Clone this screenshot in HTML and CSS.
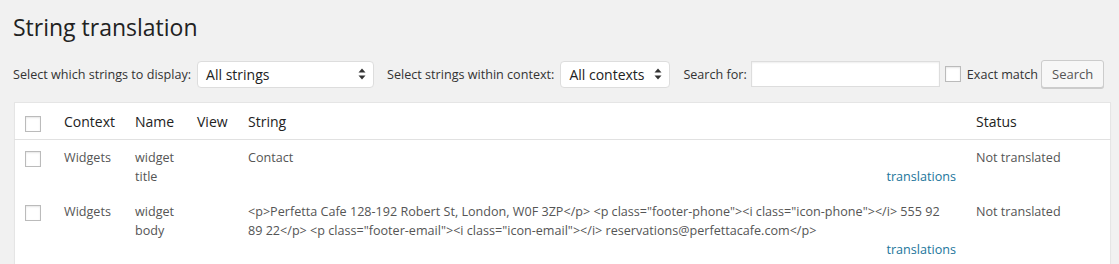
FILE: index.html
```html
<!DOCTYPE html>
<html lang="en">
<head>
    <meta charset="UTF-8">
    <title>String translation</title>
    <link rel="stylesheet" href="styles.css">
</head>
<body>
    <div class="wrap">
        <h2 class="page-title">String translation</h2>
        <div class="filters">
            <label class="filter-label">Select which strings to display:</label>
            <div class="select select-strings">
                <span>All strings</span>
                <svg width="8" height="12" viewBox="0 0 8 12"><path d="M4 0.5 L7.5 4.5 H0.5 Z M4 11.5 L7.5 7.5 H0.5 Z" fill="#333"/></svg>
            </div>
            <label class="filter-label gap">Select strings within context:</label>
            <div class="select select-context">
                <span>All contexts</span>
                <svg width="8" height="12" viewBox="0 0 8 12"><path d="M4 0.5 L7.5 4.5 H0.5 Z M4 11.5 L7.5 7.5 H0.5 Z" fill="#333"/></svg>
            </div>
            <label class="filter-label gap-sm">Search for:</label>
            <input class="search-input" type="text">
            <span class="checkbox"></span>
            <label class="filter-label exact">Exact match</label>
            <button class="button">Search</button>
        </div>
        <table class="strings">
            <thead>
                <tr>
                    <th class="col-check"><span class="checkbox"></span></th>
                    <th class="col-context">Context</th>
                    <th class="col-name">Name</th>
                    <th class="col-view">View</th>
                    <th class="col-string">String</th>
                    <th class="col-status">Status</th>
                </tr>
            </thead>
            <tbody>
                <tr>
                    <td class="col-check"><span class="checkbox"></span></td>
                    <td>Widgets</td>
                    <td>widget title</td>
                    <td></td>
                    <td>
                        <div>Contact</div>
                        <div class="row-link"><a href="#">translations</a></div>
                    </td>
                    <td>Not translated</td>
                </tr>
                <tr>
                    <td class="col-check"><span class="checkbox"></span></td>
                    <td>Widgets</td>
                    <td>widget body</td>
                    <td></td>
                    <td>
                        <div>&lt;p&gt;Perfetta Cafe 128-192 Robert St, London, W0F 3ZP&lt;/p&gt; &lt;p class="footer-phone"&gt;&lt;i class="icon-phone"&gt;&lt;/i&gt; 555 92 89 22&lt;/p&gt; &lt;p class="footer-email"&gt;&lt;i class="icon-email"&gt;&lt;/i&gt; reservations@perfettacafe.com&lt;/p&gt;</div>
                        <div class="row-link"><a href="#">translations</a></div>
                    </td>
                    <td>Not translated</td>
                </tr>
            </tbody>
        </table>
    </div>
</body>
</html>
```
FILE: styles.css
```css
body {
    margin: 0;
    background: #f1f1f1;
    color: #444;
    font-family: "Open Sans", sans-serif;
    font-size: 12.6px;
    line-height: 19px;
}
.wrap {
    padding: 0 8px 0 13px;
}
.page-title {
    margin: 0;
    padding: 13px 0 4px;
    font-size: 23px;
    font-weight: 400;
    line-height: 29px;
    color: #222;
}
.filters {
    display: flex;
    align-items: center;
    margin-top: 14px;
    height: 28px;
    white-space: nowrap;
}
.filter-label {
    flex-shrink: 0;
    color: #333;
    margin-right: 6px;
}
.filter-label.gap {
    margin-left: 13px;
}
.filter-label.gap-sm {
    margin-left: 13px;
    margin-right: 4px;
}
.filter-label.exact {
    margin-left: 6px;
    margin-right: 3px;
}
.select {
    display: flex;
    flex-shrink: 0;
    align-items: center;
    justify-content: space-between;
    box-sizing: border-box;
    height: 27px;
    padding: 0 7px 0 8px;
    background: #fff;
    border: 1px solid #ddd;
    border-radius: 4px;
    font-size: 14px;
    color: #222;
}
.select-strings {
    width: 177px;
}
.select-context {
    width: 110px;
}
.search-input {
    flex-shrink: 0;
    box-sizing: border-box;
    width: 189px;
    height: 26px;
    margin: 0;
    border: 1px solid #ddd;
    background: #fff;
    box-shadow: inset 0 1px 2px rgba(0, 0, 0, 0.07);
}
.checkbox {
    display: inline-block;
    flex-shrink: 0;
    box-sizing: border-box;
    width: 16px;
    height: 16px;
    border: 1px solid #bbb;
    background: #fff;
    box-shadow: inset 0 1px 2px rgba(0, 0, 0, 0.1);
}
.filters .checkbox {
    margin-left: 5px;
}
.button {
    flex-shrink: 0;
    box-sizing: border-box;
    height: 28px;
    padding: 0 10px 1px;
    border: 1px solid #ccc;
    border-radius: 3px;
    background: #f7f7f7;
    box-shadow: 0 1px 0 #ccc;
    color: #555;
    font-family: "Open Sans", sans-serif;
    font-size: 13px;
}
.strings {
    width: 1097px;
    margin-top: 14px;
    margin-left: 1px;
    border-collapse: collapse;
    background: #fff;
    border: 1px solid #e5e5e5;
    box-shadow: 0 1px 1px rgba(0, 0, 0, 0.04);
}
.strings th {
    padding: 9px 10px 8px;
    text-align: left;
    font-weight: 400;
    font-size: 14px;
    color: #222;
    border-bottom: 1px solid #e1e1e1;
}
.strings td {
    padding: 8px 10px 8px;
    vertical-align: top;
    color: #555;
}
.strings .col-check {
    width: 18px;
    padding-left: 10px;
    padding-right: 11px;
}
.strings th.col-check {
    padding-top: 10px;
    padding-bottom: 5px;
}
.strings td.col-check {
    padding-top: 11px;
}
.col-check .checkbox {
    display: block;
}
.col-context {
    width: 51px;
}
.col-name {
    width: 42px;
}
.col-view {
    width: 31px;
}
.col-string {
    width: 708px;
}
.row-link {
    text-align: right;
}
.row-link a {
    color: #21759b;
    text-decoration: none;
}
```
